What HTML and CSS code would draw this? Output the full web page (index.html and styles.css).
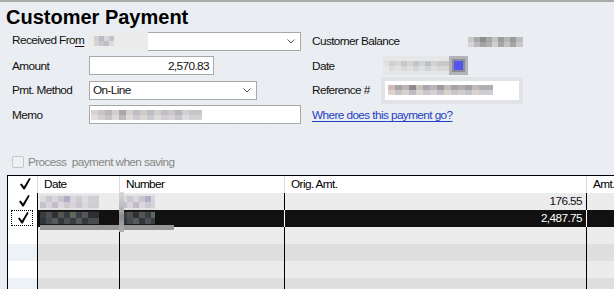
FILE: index.html
```html
<!DOCTYPE html>
<html lang="en">
<head>
  <meta charset="UTF-8">
  <title>Customer Payment</title>
  <link rel="stylesheet" href="styles.css">
</head>
<body>
<div class="win">
  <h1 class="title">Customer Payment</h1>

  <div class="form">
    <div class="fields">
      <div class="lbl lbl-up">Received Fro<u>m</u></div>
      <div class="box combo w-wide">
        <span class="blur-name"></span>
        <svg class="chev" width="8" height="5" viewBox="0 0 8 5"><polyline points="0.5,0.5 4,4 7.5,0.5" fill="none" stroke="#555" stroke-width="1"/></svg>
      </div>

      <div class="lbl">Amount</div>
      <div class="box w-amt num">2,570.83</div>

      <div class="lbl">Pmt. Method</div>
      <div class="box combo w-pmt">
        <span class="val">On-Line</span>
        <svg class="chev" width="8" height="5" viewBox="0 0 8 5"><polyline points="0.5,0.5 4,4 7.5,0.5" fill="none" stroke="#555" stroke-width="1"/></svg>
      </div>

      <div class="lbl">Memo</div>
      <div class="box w-wide"><span class="blur-memo"></span></div>
    </div>

    <div class="fields fields-right">
      <div class="lbl">Customer Balance</div>
      <div><span class="blur-bal"></span></div>

      <div class="lbl">Date</div>
      <div class="date"><span class="blur-date"></span><span class="cal"></span></div>

      <div class="lbl">Reference #</div>
      <div class="ref"><span class="blur-ref"></span></div>

      <a class="link" href="#">Where does this payment go?</a>
    </div>
  </div>

  <div class="process">
    <span class="cb"></span>
    <span>Process&nbsp; payment when saving</span>
  </div>

  <div class="grid">
    <div class="row head">
      <div class="cell chk"><svg class="tick" width="11" height="12" viewBox="0 0 11 12"><polygon points="0,6.6 1.6,5.6 4,8.6 9.2,0 10.7,0.7 4.7,11.6 3.5,11.6"/></svg></div>
      <div class="cell">Date</div>
      <div class="cell">Number</div>
      <div class="cell">Orig. Amt.</div>
      <div class="cell">Amt.</div>
    </div>
    <div class="row">
      <div class="cell chk"><svg class="tick" width="11" height="12" viewBox="0 0 11 12"><polygon points="0,6.6 1.6,5.6 4,8.6 9.2,0 10.7,0.7 4.7,11.6 3.5,11.6"/></svg></div>
      <div class="cell"></div>
      <div class="cell"></div>
      <div class="cell num">176.55</div>
      <div class="cell"></div>
    </div>
    <div class="row sel">
      <div class="cell chk"><span class="focus"><svg class="tick" width="11" height="12" viewBox="0 0 11 12"><polygon points="0,6.6 1.6,5.6 4,8.6 9.2,0 10.7,0.7 4.7,11.6 3.5,11.6"/></svg></span></div>
      <div class="cell"></div>
      <div class="cell"></div>
      <div class="cell num">2,487.75</div>
      <div class="cell"></div>
    </div>
    <div class="row">
      <div class="cell chk"></div><div class="cell"></div><div class="cell"></div><div class="cell"></div><div class="cell"></div>
    </div>
    <div class="row alt">
      <div class="cell chk"></div><div class="cell"></div><div class="cell"></div><div class="cell"></div><div class="cell"></div>
    </div>
    <div class="row">
      <div class="cell chk"></div><div class="cell"></div><div class="cell"></div><div class="cell"></div><div class="cell"></div>
    </div>
    <div class="row alt">
      <div class="cell chk"></div><div class="cell"></div><div class="cell"></div><div class="cell"></div><div class="cell"></div>
    </div>

    <!-- blurred cell contents -->
    <span class="smear date1"></span>
    <span class="smear num1"></span>
    <span class="smear date2"></span>
    <span class="smear num2"></span>
    <span class="smear bar"></span>
    <span class="smear vline"></span>
  </div>
</div>
</body>
</html>
```

FILE: styles.css
```css
body {
  margin: 0;
  width: 614px;
  height: 289px;
  overflow: hidden;
  background-color: #eaedf1;
  background-image: radial-gradient(circle at 1px 1px, #dcdfe3 0.6px, transparent 1px);
  background-size: 32px 32px;
  background-position: 9px -1px;
  font-family: "Liberation Sans", Arial, sans-serif;
  font-size: 11.8px;
  letter-spacing: -0.6px;
  color: #111;
}

.win {
  width: 614px;
  height: 289px;
  overflow: hidden;
  box-sizing: border-box;
  border-top: 2px solid #aaaaaa;
}

.title {
  margin: 0;
  padding: 3px 0 0 6px;
  font-size: 20px;
  line-height: 24px;
  font-weight: 700;
  letter-spacing: 0;
  color: #000;
}

.form {
  display: flex;
  gap: 11px;
  margin-top: 2px;
  padding-left: 12px;
}

.fields {
  display: grid;
  grid-template-columns: 77px auto;
  grid-auto-rows: 20px;
  row-gap: 4.67px;
  align-items: center;
}

.fields-right {
  grid-template-columns: 73px auto;
}

.lbl {
  white-space: nowrap;
}

.lbl-up {
  margin-top: -3px;
}

.lbl u {
  text-decoration-thickness: 1px;
  text-underline-offset: 2px;
}

.box {
  box-sizing: border-box;
  height: 19px;
  background: #fff;
  border: 1px solid #a8a8a8;
  display: flex;
  align-items: center;
  padding: 0 3px;
}

.w-wide { width: 212px; }
.w-amt { width: 125px; }
.w-pmt { width: 168px; }

.num {
  justify-content: flex-end;
  padding-right: 4px;
}

.combo {
  padding-right: 5px;
}

.combo .val {
  flex: 1;
}

.combo .chev {
  margin-left: auto;
}

/* pixelated (redacted) fields */
.blur-name {
  align-self: stretch;
  width: 59px;
  margin: -2px 0 -2px -4px;
  background:
    linear-gradient(90deg, #cfcfd4 0 5px, #b9b9c0 5px 10px, #d8d8dc 10px 15px, #c4c4c9 15px 20px) 5px 5px / 20px 5px no-repeat,
    linear-gradient(90deg, #d9d3cf 0 5px, #c7c7cc 5px 10px, #bfc0c6 10px 15px, #dcdcdf 15px 20px) 5px 10px / 20px 5px no-repeat,
    #ececec;
}

.blur-memo {
  width: 111px;
  height: 10px;
  margin-left: -2px;
  background:
    linear-gradient(90deg, #d8d2d2 0 7px, #c9c3c4 7px 14px, #bdb6b8 14px 21px, #d2cdcc 21px 28px, #a9a5a9 28px 35px, #d4d0d2 35px 42px, #c0bdc2 42px 49px, #cfcbc8 49px 56px, #bcbcc2 56px 63px, #d2d0cf 63px 70px, #c2bfc4 70px 77px, #cbc8cb 77px 84px, #b8b6bb 84px 91px, #d1cfd0 91px 98px, #c7c5c8 98px 111px) top / 100% 5px no-repeat,
    linear-gradient(90deg, #e2dede 0 7px, #d3cfd0 7px 14px, #c7c3c6 14px 21px, #dcd8d7 21px 28px, #bcb9bd 28px 35px, #dedad9 35px 42px, #cdcbd0 42px 49px, #d9d6d3 49px 56px, #c9c9ce 56px 63px, #dddbdb 63px 70px, #cfcdd1 70px 77px, #d6d4d6 77px 84px, #c7c6ca 84px 91px, #dddbdc 91px 98px, #d3d1d4 98px 111px) bottom / 100% 5px no-repeat;
}

.blur-bal {
  display: block;
  width: 55px;
  height: 10px;
  margin: 1px 0 0 83px;
  background:
    linear-gradient(90deg, #c8c8c8 0 6px, #a9a9a9 6px 12px, #8e8e8e 12px 18px, #a6a6a6 18px 24px, #c4c4c4 24px 30px, #9c9c9c 30px 36px, #b5b5b5 36px 42px, #9a9a9a 42px 48px, #bdbdbd 48px) top / 100% 5px no-repeat,
    linear-gradient(90deg, #d4d4d4 0 6px, #bababa 6px 12px, #a4a4a4 12px 18px, #b0b0b0 18px 24px, #d0d0d0 24px 30px, #a8a8a8 30px 36px, #c3c3c3 36px 42px, #a6a6a6 42px 48px, #c9c9c9 48px) bottom / 100% 5px no-repeat;
}

.date {
  display: flex;
  height: 19px;
  margin-left: -2px;
}

.blur-date {
  width: 66px;
  background:
    linear-gradient(90deg, #e4dede 0 6px, #ccd0d3 6px 12px, #d7d8d6 12px 18px, #c4c9cc 18px 24px, #d8d4cc 24px 30px, #c3c5c9 30px 36px, #cfd1d3 36px 42px, #bfc1c6 42px 48px, #d3d2d3 48px 54px, #c8c8cb 54px) 0 5px / 100% 5px no-repeat,
    linear-gradient(90deg, #ece8e8 0 6px, #dadcdf 6px 12px, #e3e3e2 12px 18px, #d6d9db 18px 24px, #e2dfd9 24px 30px, #d3d4d8 30px 36px, #dddfe0 36px 42px, #d0d2d6 42px 48px, #e0dfe0 48px 54px, #d8d8da 54px) 0 10px / 100% 5px no-repeat,
    #e6e7e9;
}

.cal {
  width: 19px;
  background:
    linear-gradient(#5555ee, #5555ee) 5px 5px / 9px 9px no-repeat,
    linear-gradient(#8d8d9a, #8d8d9a) 3px 3px / 13px 13px no-repeat,
    #b4b4b8;
}

.ref {
  box-sizing: border-box;
  width: 134px;
  height: 19px;
  background: #fff;
  box-shadow: 0 0 0 4px #e1e3e7;
  display: flex;
  align-items: center;
  padding-left: 3px;
}

.blur-ref {
  width: 105px;
  height: 10px;
  background:
    linear-gradient(90deg, #cdbcb8 0 7px, #a8a1a5 7px 14px, #bfb6b4 14px 21px, #8f8a90 21px 28px, #c8c2bc 28px 35px, #aba6ae 35px 42px, #b9b4b8 42px 49px, #9c99a3 49px 56px, #c4bcb5 56px 63px, #a5a3aa 63px 70px, #b6adb3 70px 77px, #a1a0a6 77px 84px, #c1bab6 84px 91px, #b0aeb3 91px) top / 100% 5px no-repeat,
    linear-gradient(90deg, #ddd3d0 0 7px, #c7c3c6 7px 14px, #d6d0ce 14px 21px, #bdbbbf 21px 28px, #dbd6d2 28px 35px, #c9c6cc 35px 42px, #d3cfd2 42px 49px, #c2c1c6 49px 56px, #d9d3cf 56px 63px, #c7c6cb 63px 70px, #d2cdd0 70px 77px, #c5c4c8 77px 84px, #d8d3d0 84px 91px, #cecdd1 91px) bottom / 100% 5px no-repeat;
}

.link {
  grid-column: 1 / 3;
  color: #1f3fc6;
  text-decoration: underline;
  text-underline-offset: 2px;
  white-space: nowrap;
}

.process {
  display: flex;
  align-items: center;
  gap: 4px;
  height: 14px;
  margin-top: 30px;
  padding-left: 12px;
  color: #868686;
}

.cb {
  box-sizing: border-box;
  width: 12px;
  height: 12px;
  border: 1px solid #c6c6c6;
  border-radius: 2px;
  background: #eef0f3;
}

/* applied-to grid */
.grid {
  position: relative;
  width: 606px;
  margin: 6px 0 0 7px;
  border-left: 1px solid #000;
  border-top: 1px solid #000;
}

.row {
  display: grid;
  grid-template-columns: 30px 82px 165px 302px 1fr;
  height: 17px;
}

.cell {
  box-sizing: border-box;
  border-right: 1px solid #000;
  background: #ececec;
  padding: 0 6px;
  line-height: 17px;
  white-space: nowrap;
  overflow: hidden;
}

.row .cell:last-child {
  border-right: 0;
  padding-right: 0;
}

.cell.num {
  text-align: right;
  padding-right: 4px;
}

.cell.chk {
  background: #fff;
  padding: 0;
  display: flex;
  align-items: center;
}

.tick {
  margin-left: 11px;
  fill: #000;
}

.head .cell {
  background: #fff;
  border-right-color: #dcdcdc;
  color: #000;
}

.head .chk .tick {
  margin-left: 12px;
}

.alt .cell {
  background: #dfdfdf;
}

.alt .cell.chk {
  background: #edf2f8;
}

.sel .cell {
  background: #111;
  color: #fff;
  border-right-color: #fff;
}

.sel .cell.chk {
  background: #fff;
  border-right-color: #000;
}

.focus {
  box-sizing: border-box;
  display: flex;
  align-items: center;
  width: 22px;
  height: 16px;
  margin-left: 3px;
  border: 1px dotted #000;
}

.focus .tick {
  margin-left: 6px;
}

.smear {
  position: absolute;
}

.date1, .num1 {
  top: 18px;
  height: 16px;
  background:
    linear-gradient(90deg, #dedbe0 0 6px, #cbc6cf 6px 12px, #d9d7dc 12px 18px, #c9c5d0 18px 24px, #b4abc6 24px 30px, #d8d6da 30px 36px, #cdcbd1 36px 42px, #dcdbdf 42px 48px, #d1d0d5 48px) 0 2px / 100% 6px no-repeat,
    linear-gradient(90deg, #c5c0cc 0 6px, #d7d4da 6px 12px, #c1bccb 12px 18px, #dad8dc 18px 24px, #ccc9d0 24px 30px, #d5d3d8 30px 36px, #c8c6ce 36px 42px, #d9d8dc 42px 48px, #cfced3 48px) 0 8px / 100% 6px no-repeat,
    #e4e4e6;
}

.date1 { left: 32px; width: 59px; }
.num1 { left: 113px; width: 34px; }

.date2, .num2 {
  top: 35px;
  height: 15px;
  background:
    linear-gradient(90deg, #3b3b3e 0 6px, #4f4f52 6px 12px, #2e3138 12px 18px, #55574f 18px 24px, #3a3d44 24px 30px, #5b6a5d 30px 36px, #3e4048 36px 42px, #565659 42px 48px, #2f2f33 48px) 0 1px / 100% 6px no-repeat,
    linear-gradient(90deg, #2c3640 0 6px, #47494d 6px 12px, #575a5a 12px 18px, #34373c 18px 24px, #4d4f54 24px 30px, #3a3c42 30px 36px, #55585c 36px 42px, #36383d 42px 48px, #4a4b4f 48px) 0 7px / 100% 6px no-repeat,
    #1a1a1b;
}

.date2 { left: 32px; width: 59px; }
.num2 { left: 113px; width: 34px; }

.bar {
  left: 32px;
  top: 49px;
  width: 134px;
  height: 5px;
  background: #979797;
}

.vline {
  left: 111px;
  top: 16px;
  width: 5px;
  height: 40px;
  background: linear-gradient(#dadada, #b9b9b9 40%, #8a8a8a 60%, #b0b0b0);
}
```
